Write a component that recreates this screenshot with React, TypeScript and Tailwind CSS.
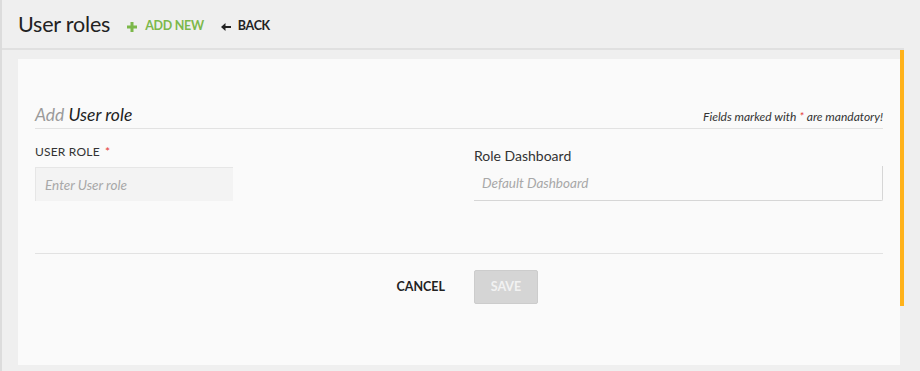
import React from "react";

export default function App() {
  return (
    <div className="w-[920px] h-[371px] overflow-hidden bg-[#efefef] font-['Lato',sans-serif]">
      <div className="w-[904px] h-full border-l-2 border-[#dcdcdc] flex flex-col">
        <header className="h-[50px] shrink-0 flex items-center pl-[16px] pt-[2px] border-b-2 border-[#e0e0e0]">
          <h1 className="text-[21.5px] leading-none text-[#222] tracking-[-0.2px]">User roles</h1>
          <button className="ml-[17px] mt-[3px] flex items-center gap-[8px] text-[12.5px] font-bold text-[#7cb84a] tracking-[-0.3px]">
            <svg width="10" height="10" viewBox="0 0 10 10">
              <path d="M5 0v10M0 5h10" stroke="#7cb84a" strokeWidth="3" />
            </svg>
            ADD NEW
          </button>
          <button className="ml-[17px] mt-[3px] flex items-center gap-[7px] text-[12.5px] font-bold text-[#222] tracking-[-0.3px]">
            <svg width="10" height="8" viewBox="0 0 10 8">
              <path d="M0 4l4.5-4v8z" fill="#222" />
              <path d="M3 4h7" stroke="#222" strokeWidth="2" />
            </svg>
            BACK
          </button>
        </header>
        <div className="flex flex-1">
          <div className="flex-1 pl-[16px] pt-[9px]">
            <div className="bg-[#fafafa] h-[306px] px-[17px] pt-[44px]">
              <div className="flex items-end justify-between border-b border-[#e2e2e2] pb-[1px]">
                <div className="text-[17.5px] italic leading-[24px]">
                  <span className="text-[#9a9a9a]">Add</span>{" "}
                  <span className="text-[#222]">User role</span>
                </div>
                <div className="text-[12px] italic text-[#333] leading-[18px] mb-[1px]">
                  Fields marked with <span className="text-[#e53935]">*</span> are mandatory!
                </div>
              </div>
              <div className="grid grid-cols-2 mt-[15px]">
                <div className="pr-[14px]">
                  <label className="block text-[12px] text-[#333] leading-[16px] tracking-[0.2px]">
                    USER ROLE <span className="text-[#e53935] ml-[2px]">*</span>
                  </label>
                  <input
                    placeholder="Enter User role"
                    className="mt-[7px] w-[198px] h-[34px] bg-[#f3f3f3] border-t border-l border-[#e6e6e6] px-[9px] text-[13.5px] italic placeholder:text-[#a8a8a8] outline-none"
                  />
                </div>
                <div className="pl-[15px]">
                  <label className="block text-[14px] text-[#333] leading-[18px] mt-[3px]">
                    Role Dashboard
                  </label>
                  <input
                    placeholder="Default Dashboard"
                    className="mt-[1px] w-full h-[35px] bg-[#fafafa] border-r border-b border-[#d6d6d6] rounded-br-[2px] px-[8px] text-[13.5px] italic placeholder:text-[#a8a8a8] outline-none"
                  />
                </div>
              </div>
              <div className="border-b border-[#e2e2e2] mt-[52px]" />
              <div className="grid grid-cols-2 mt-[16px]">
                <div className="flex justify-end items-center pr-[14px]">
                  <button className="text-[12.5px] font-bold text-[#222]">CANCEL</button>
                </div>
                <div className="pl-[15px]">
                  <button className="w-[64px] h-[34px] bg-[#d5d5d5] border border-[#cccccc] rounded-[2px] text-[12.5px] font-bold text-[#f2f2f2]">
                    SAVE
                  </button>
                </div>
              </div>
            </div>
          </div>
          <div className="w-[4px] shrink-0">
            <div className="h-[256px] bg-[#ffb21a]" />
          </div>
        </div>
      </div>
    </div>
  );
}
